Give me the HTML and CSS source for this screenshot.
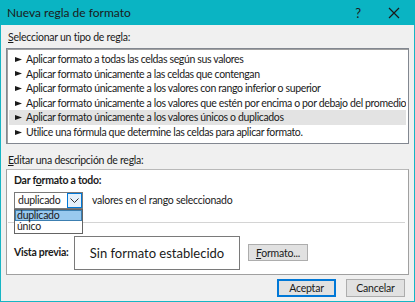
FILE: index.html
```html
<!DOCTYPE html>
<html lang="es">
<head>
    <meta charset="UTF-8">
    <link rel="stylesheet" href="styles.css">
    <title>Nueva regla de formato</title>
</head>
<body>
    <div class="dlg">
        <!-- barra de titulo -->
        <div class="ttl">
            <span class="ttx">Nueva regla de formato</span>
            <span class="hlp">?</span>
            <svg class="cls" width="12" height="12" viewBox="0 0 12 12"><path d="M1 1 L11 11 M11 1 L1 11" stroke="#1a1a1a" stroke-width="1.2" fill="none"/></svg>
        </div>
        <div class="cnt">
            <div class="lbl"><u>S</u>eleccionar un tipo de regla:</div>
            <ul class="lst">
                <li class="itm"><svg class="arw" width="7" height="5" viewBox="0 0 7 5"><path d="M0 0 L7 2.5 L0 5 Z" fill="#1a1a1a"/></svg>Aplicar formato a todas las celdas según sus valores</li>
                <li class="itm"><svg class="arw" width="7" height="5" viewBox="0 0 7 5"><path d="M0 0 L7 2.5 L0 5 Z" fill="#1a1a1a"/></svg>Aplicar formato únicamente a las celdas que contengan</li>
                <li class="itm"><svg class="arw" width="7" height="5" viewBox="0 0 7 5"><path d="M0 0 L7 2.5 L0 5 Z" fill="#1a1a1a"/></svg>Aplicar formato únicamente a los valores con rango inferior o superior</li>
                <li class="itm"><svg class="arw" width="7" height="5" viewBox="0 0 7 5"><path d="M0 0 L7 2.5 L0 5 Z" fill="#1a1a1a"/></svg>Aplicar formato únicamente a los valores que estén por encima o por debajo del promedio</li>
                <li class="itm sel"><svg class="arw" width="7" height="5" viewBox="0 0 7 5"><path d="M0 0 L7 2.5 L0 5 Z" fill="#1a1a1a"/></svg>Aplicar formato únicamente a los valores únicos o duplicados</li>
                <li class="itm"><svg class="arw" width="7" height="5" viewBox="0 0 7 5"><path d="M0 0 L7 2.5 L0 5 Z" fill="#1a1a1a"/></svg>Utilice una fórmula que determine las celdas para aplicar formato.</li>
            </ul>
            <div class="lbl lb2"><u>E</u>ditar una descripción de regla:</div>
            <div class="pnl">
                <div class="bld">Dar f<u>o</u>rmato a todo:</div>
                <div class="row">
                    <div class="cmb">
                        <span class="cvl">duplicado</span>
                        <span class="cbt"><svg width="9" height="5" viewBox="0 0 9 5"><path d="M0.5 0.5 L4.5 4.5 L8.5 0.5" stroke="#333" fill="none"/></svg></span>
                        <ul class="dd">
                            <li class="ddi ddsel">duplicado</li>
                            <li class="ddi">único</li>
                        </ul>
                    </div>
                    <span class="vtx">valores en el rango seleccionado</span>
                </div>
                <div class="sep"></div>
                <div class="prv">
                    <span class="bld pl">Vista previa:</span>
                    <div class="pbx">Sin formato establecido</div>
                    <button class="btn fbt"><u>F</u>ormato...</button>
                </div>
            </div>
            <div class="btns">
                <button class="btn ok">Aceptar</button>
                <button class="btn">Cancelar</button>
            </div>
        </div>
    </div>
</body>
</html>
```

FILE: styles.css
```css
*{
    margin: 0;
    padding: 0;
    box-sizing: border-box;
    list-style-type: none;
}
body{
    width: 415px;
    height: 302px;
    overflow: hidden;
    font-family: 'Lato', sans-serif;
    font-size: 10.5px;
    letter-spacing: -0.25px;
    color: #1a1a1a;
    background: #f0f0f0;
}
.dlg{
    width: 415px;
    height: 302px;
    border: 1px solid #17b5c4;
    border-top: none;
    display: flex;
    flex-direction: column;
}
.ttl{
    height: 25px;
    flex-shrink: 0;
    background: #0ab4c3;
    display: flex;
    align-items: center;
    padding-left: 7px;
    margin: 0 -1px;
    letter-spacing: 0;
}
.ttx{
    font-size: 12px;
    flex: 1;
}
.hlp{
    font-size: 13px;
    margin-right: 27px;
}
.cls{
    margin-right: 15px;
}
.cnt{
    padding: 0 5px;
    flex: 1;
    display: flex;
    flex-direction: column;
}
.lbl{
    margin-top: 5px;
    height: 15px;
    line-height: 15px;
    padding-left: 2px;
}
.lst{
    margin-top: 3px;
    border: 1px solid #828790;
    box-shadow: inset 1px 1px 0 #a0a0a0;
    background: #fff;
    padding: 3px 2px 3px 2px;
}
.itm{
    height: 14.6px;
    line-height: 14.6px;
    display: flex;
    align-items: center;
    padding-left: 6px;
    white-space: nowrap;
    overflow: hidden;
    letter-spacing: -0.36px;
}
.arw{
    margin-right: 4px;
    flex-shrink: 0;
}
.sel{
    background: #e3e3e3;
}
.lb2{
    margin-top: 9px;
}
.pnl{
    margin-top: 1px;
    height: 106px;
    flex-shrink: 0;
    border: 1px solid #a0a0a0;
    border-top-color: #b9b9b9;
    background: #fff;
    padding: 3px 0 0 7px;
}
.bld{
    font-weight: bold;
    height: 15px;
    line-height: 15px;
    white-space: nowrap;
}
.row{
    display: flex;
    align-items: center;
    margin-top: 4px;
    height: 17px;
}
.cmb{
    position: relative;
    width: 69px;
    height: 17px;
    border: 1px solid #7a7a7a;
    display: flex;
    align-items: center;
}
.cvl{
    flex: 1;
    padding-left: 3px;
}
.cbt{
    width: 15px;
    height: 15px;
    border: 1px solid #0078d7;
    background: #e5f1fb;
    display: flex;
    align-items: center;
    justify-content: center;
}
.dd{
    position: absolute;
    left: -1px;
    top: 16px;
    width: 69px;
    border: 1px solid #646464;
    background: #fff;
}
.ddi{
    height: 11.5px;
    line-height: 11px;
    padding-left: 2px;
}
.ddsel{
    background: #99c9ef;
    border: 1px solid #3c7fb1;
    padding-left: 1px;
    line-height: 9px;
}
.vtx{
    margin-left: 9px;
}
.sep{
    height: 1px;
    background: #d4d4d4;
    margin: 13px 3px 0 -6px;
}
.prv{
    display: flex;
    align-items: center;
    margin-top: 13px;
}
.pl{
    width: 60px;
}
.pbx{
    width: 166px;
    height: 34px;
    border: 1px solid #7a7a7a;
    display: flex;
    align-items: center;
    justify-content: center;
    font-size: 13px;
    letter-spacing: 0;
}
.btn{
    font-family: 'Lato', sans-serif;
    font-size: 10.5px;
    letter-spacing: -0.2px;
    color: #1a1a1a;
    background: #e1e1e1;
    border: 1px solid #adadad;
    height: 18px;
    width: 59px;
}
.fbt{
    margin-left: 8px;
    width: 60px;
    height: 17px;
}
.btns{
    display: flex;
    justify-content: flex-end;
    gap: 10px;
    margin-top: 4px;
    padding-right: 4px;
}
.ok{
    border: 2px solid #0078d7;
}
```
